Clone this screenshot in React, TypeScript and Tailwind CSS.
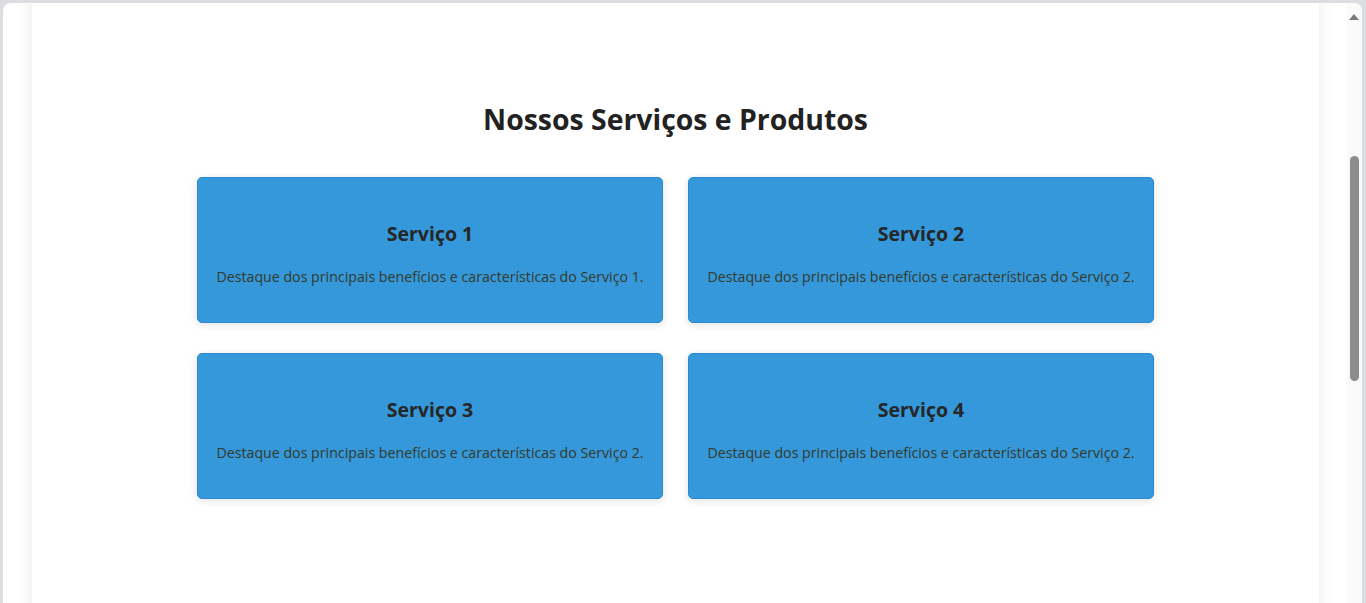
import React from "react";

const services = [
  { title: "Serviço 1", text: "Destaque dos principais benefícios e características do Serviço 1." },
  { title: "Serviço 2", text: "Destaque dos principais benefícios e características do Serviço 2." },
  { title: "Serviço 3", text: "Destaque dos principais benefícios e características do Serviço 2." },
  { title: "Serviço 4", text: "Destaque dos principais benefícios e características do Serviço 2." },
];

function ServiceCard({ title, text }: { title: string; text: string }) {
  return (
    <div className="box-border flex h-[146px] flex-col items-center rounded-[5px] border border-[#2b8ad2] bg-[#3498db] pt-[44px] shadow-[0_2px_8px_rgba(0,0,0,0.12)]">
      <h3 className="text-[19.5px] font-bold leading-[24px] text-[#262626]">{title}</h3>
      <p className="mt-[21px] text-[14.2px] leading-[20px] text-[#36382a]">{text}</p>
    </div>
  );
}

export default function App() {
  return (
    <div
      className="h-[603px] overflow-hidden bg-[#dcdde0] pl-[3px] pr-[4px] pt-[3px]"
      style={{ fontFamily: '"Open Sans", "Noto Sans", sans-serif' }}
    >
      <div className="flex h-[640px] overflow-hidden rounded-t-[8px] bg-white">
        <div className="flex flex-1 overflow-hidden pl-[29px] pr-[28px]">
          <div className="-mt-[20px] flex-1 bg-white pt-[119px] shadow-[0_0_14px_rgba(0,0,0,0.09)]">
            <h2 className="text-center text-[28.4px] font-bold leading-[34px] text-[#222]">
              Nossos Serviços e Produtos
            </h2>
            <div className="mx-auto mt-[41px] grid w-[957px] grid-cols-2 gap-x-[25px] gap-y-[30px]">
              {services.map((s) => (
                <ServiceCard key={s.title} title={s.title} text={s.text} />
              ))}
            </div>
          </div>
        </div>

        {/* scrollbar */}
        <div className="flex w-[15px] flex-col items-center bg-[#fafafa]">
          <svg width="10" height="6" viewBox="0 0 10 6" className="mr-[2px] mt-[11px]">
            <path d="M5 0 L10 6 L0 6 Z" fill="#7a7a7a" />
          </svg>
          <div className="mt-[136px] h-[225px] w-[9px] rounded-full bg-[#8c8c8c]" />
        </div>
      </div>
    </div>
  );
}
